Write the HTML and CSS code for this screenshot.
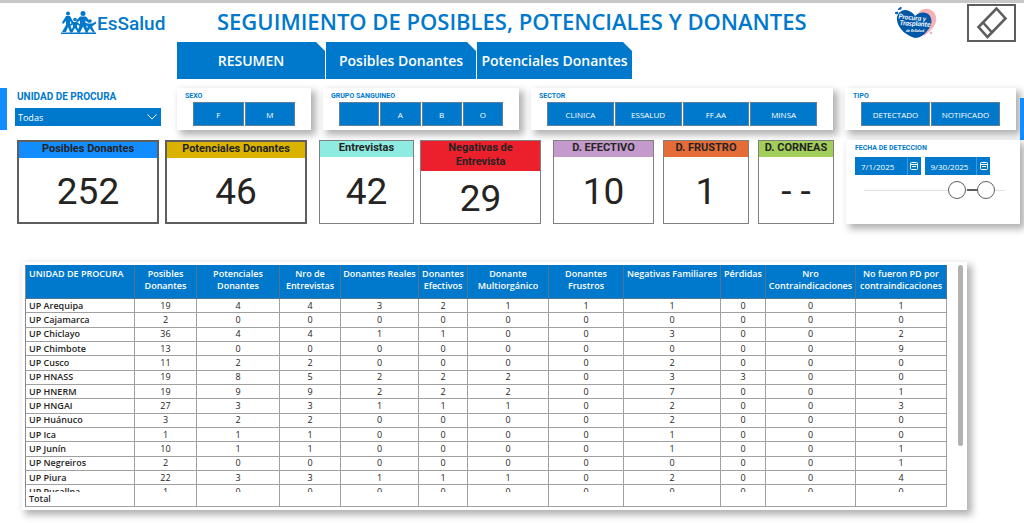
FILE: index.html
```html
<!DOCTYPE html>
<html lang="es">
<head>
    <meta charset="UTF-8">
    <meta name="viewport" content="width=device-width, initial-scale=1.0">
    <title>Seguimiento de Donantes</title>
    <link rel="stylesheet" href="styles.css">
</head>
<body>
    <header class="header">
        <div class="logo">
            <svg class="logo-family" viewBox="0 0 36 24" aria-hidden="true">
                <g fill="#0079cc">
                    <circle cx="7" cy="2.500" r="2"/>
                    <circle cx="22" cy="2.500" r="2.500"/>
                    <circle cx="14" cy="8.500" r="1.800"/>
                    <circle cx="21" cy="10" r="1.500"/>
                    <circle cx="29" cy="10" r="1.800"/>
                    <path d="M5 5h4l4 7-1 1.500-3-3.500V14l3 7H9l-2-5-2 5H1l4-7v-4l-3 3-1-1.500z"/>
                    <path d="M19 5.500h6l4 5-1 1.500-4-2.500 1 4 2 8h-2l-3-6-3 6h-3l3-8v-4l-3 2-1-1.500z"/>
                    <path d="M12 11h4l4 3-1 1-3-1.500V16l3 5.500h-2L14 17l-3 4.500H9l3-5.500v-2.500L9 15l-1-1z"/>
                    <path d="M27 12.500h4l4-2v2l-4 3 3 6h-2l-3-4-3 4h-2l3-6-4-2v-2z"/>
                    <path d="M0 21.500h35v1.500H0z"/>
                </g>
            </svg>
            <span class="logo-text">EsSalud</span>
        </div>
        <h1 class="title">SEGUIMIENTO DE POSIBLES, POTENCIALES Y DONANTES</h1>
        <svg class="heart" viewBox="0 0 44 34" role="img" aria-label="Procura y Trasplante">
            <path d="M23 11C24 3 32 1 37 4c7 4 7 13 0 20l-7 6z" fill="#f6b1b5"/>
            <path d="M21 32C13 30 4 23 3 14 2 7 9 2 15 5c3 1 5 3 6 5 4-4 11-5 15 0 3 5 1 11-3 15-3 4-7 7-12 7z" fill="#0057a8"/>
            <path d="M4 3.500l3-2.500v2zM1 7l3-1-1 2z" stroke="#0057a8" stroke-width="1" fill="#0057a8"/>
            <circle cx="37" cy="27" r="1.300" fill="#f6b1b5"/>
            <g fill="#fff" font-family="Lato, sans-serif" font-style="italic" font-weight="700" text-anchor="middle">
                <text x="18" y="14" font-size="7" transform="rotate(6 18 14)">Procura y</text>
                <text x="21" y="20" font-size="7" transform="rotate(3 21 20)">Trasplante</text>
                <text x="21" y="26" font-size="4">de EsSalud</text>
            </g>
        </svg>
        <button class="eraser" type="button" aria-label="Borrar filtros">
            <svg viewBox="0 0 32 32" fill="none" stroke="#605e5c" stroke-width="2.600">
                <path d="M20.500 1.500l9 10L11.500 30l-9-10z"/>
                <path d="M7 15.500l9 10"/>
            </svg>
        </button>
    </header>

    <nav class="tabs">
        <button class="tab" type="button">RESUMEN</button>
        <button class="tab" type="button">Posibles Donantes</button>
        <button class="tab" type="button">Potenciales Donantes</button>
    </nav>

    <main>
        <section class="filters">
            <div class="edge"></div>
            <div class="filter-grid">
                <div class="unit">
                    <label for="unidad">UNIDAD DE PROCURA</label>
                    <div class="select-box">
                        <select id="unidad">
                            <option>Todas</option>
                        </select>
                        <svg class="chevron" viewBox="0 0 10 6" fill="none" stroke="#fff"><path d="M0.500 0.500L5 5l4.500-4.500"/></svg>
                    </div>
                </div>
                <div class="panel slicer">
                    <h2>SEXO</h2>
                    <div class="options">
                        <button type="button">F</button>
                        <button type="button">M</button>
                    </div>
                </div>
                <div class="panel slicer">
                    <h2>GRUPO SANGUINEO</h2>
                    <div class="options">
                        <button type="button" aria-label="Sin grupo"></button>
                        <button type="button">A</button>
                        <button type="button">B</button>
                        <button type="button">O</button>
                    </div>
                </div>
                <div class="panel slicer">
                    <h2>SECTOR</h2>
                    <div class="options">
                        <button type="button">CLINICA</button>
                        <button type="button">ESSALUD</button>
                        <button type="button">FF.AA</button>
                        <button type="button">MINSA</button>
                    </div>
                </div>
                <div class="panel slicer">
                    <h2>TIPO</h2>
                    <div class="options">
                        <button type="button">DETECTADO</button>
                        <button type="button">NOTIFICADO</button>
                    </div>
                </div>
            </div>
            <div class="edge edge-right"></div>
        </section>

        <section class="summary">
            <div class="cards cards-main">
                <div class="card strong"><h3 class="blue">Posibles Donantes</h3><p>252</p></div>
                <div class="card strong"><h3 class="gold">Potenciales Donantes</h3><p>46</p></div>
            </div>
            <div class="cards cards-interview">
                <div class="card"><h3 class="aqua">Entrevistas</h3><p>42</p></div>
                <div class="card"><h3 class="red">Negativas de<br>Entrevista</h3><p>29</p></div>
            </div>
            <div class="cards cards-result">
                <div class="card"><h3 class="purple">D. EFECTIVO</h3><p>10</p></div>
                <div class="card"><h3 class="orange">D. FRUSTRO</h3><p>1</p></div>
                <div class="card"><h3 class="green">D. CORNEAS</h3><p>- -</p></div>
            </div>
            <div class="panel dates">
                <h2>FECHA DE DETECCION</h2>
                <div class="date-row">
                    <div class="date">
                        <input type="text" value="7/1/2025" aria-label="Desde">
                        <button type="button" aria-label="Abrir calendario inicial">
                            <svg viewBox="0 0 8 8" fill="none" stroke="#fff"><rect x="0.500" y="0.500" width="7" height="7" rx="1"/><path d="M1 2.500h6M2 4.500h4"/></svg>
                        </button>
                    </div>
                    <div class="date">
                        <input type="text" value="9/30/2025" aria-label="Hasta">
                        <button type="button" aria-label="Abrir calendario final">
                            <svg viewBox="0 0 8 8" fill="none" stroke="#fff"><rect x="0.500" y="0.500" width="7" height="7" rx="1"/><path d="M1 2.500h6M2 4.500h4"/></svg>
                        </button>
                    </div>
                </div>
                <div class="range">
                    <input type="range" min="0" max="100" value="68" aria-label="Fecha inicial">
                    <input type="range" min="0" max="100" value="92" aria-label="Fecha final">
                </div>
            </div>
        </section>

        <section class="panel report">
            <div class="table-scroll">
                <table>
                    <colgroup id="cols"></colgroup>
                    <thead>
                        <tr>
                            <th>UNIDAD DE PROCURA</th>
                            <th>Posibles Donantes</th>
                            <th>Potenciales Donantes</th>
                            <th>Nro de Entrevistas</th>
                            <th>Donantes Reales</th>
                            <th>Donantes Efectivos</th>
                            <th>Donante Multiorgánico</th>
                            <th>Donantes Frustros</th>
                            <th>Negativas Familiares</th>
                            <th>Pérdidas</th>
                            <th>Nro Contraindicaciones</th>
                            <th>No fueron PD por contraindicaciones</th>
                        </tr>
                    </thead>
                    <tbody id="rows"></tbody>
                    <tfoot>
                        <tr><th>Total</th><td></td><td></td><td></td><td></td><td></td><td></td><td></td><td></td><td></td><td></td><td></td></tr>
                    </tfoot>
                </table>
            </div>
            <div class="scrollbar"></div>
        </section>
    </main>

    <script src="script.js"></script>
</body>
</html>
```

FILE: styles.css
```css
* {
    box-sizing: border-box;
}

body {
    margin: 0;
    min-height: 100vh;
    border-top: 3px solid #c8c8c8;
    background-color: #fff;
    color: #252423;
    font-family: "Open Sans", "Noto Sans", sans-serif;
}

h1, h2, h3, p {
    margin: 0;
}

button, input, select {
    font-family: inherit;
    margin: 0;
    padding: 0;
}

/* Header */
.header {
    display: flex;
    align-items: center;
    height: 39px;
    padding: 0 8px 0 61px;
}

.logo {
    display: flex;
    align-items: center;
    width: 156px;
    color: #0079cc;
}

.logo-family {
    width: 36px;
    height: 24px;
}

.logo-text {
    font-family: Roboto, sans-serif;
    font-size: 19px;
    font-weight: 500;
    line-height: 24px;
    padding-top: 3px;
}

.title {
    flex: 1;
    color: #0079cc;
    font-size: 22px;
    font-weight: 600;
    line-height: 32px;
    padding-bottom: 4px;
    white-space: nowrap;
}

.heart {
    width: 44px;
    height: 34px;
    margin-right: 29px;
}

.eraser {
    width: 49px;
    height: 38px;
    border: 2px solid #605e5c;
    background-color: #fff;
}

.eraser svg {
    display: block;
    width: 32px;
    height: 32px;
    margin: auto;
}

/* Page tabs */
.tabs {
    display: grid;
    grid-template-columns: 148fr 150fr 155fr;
    gap: 1px;
    width: 455px;
    margin-left: 177px;
}

.tab {
    height: 37px;
    border: none;
    background-color: #0079cc;
    color: #fff;
    font-size: 14px;
    font-weight: 600;
    white-space: nowrap;
    clip-path: polygon(0 0, calc(100% - 9px) 0, 100% 9px, 100% 100%, 0 100%);
}

/* Filters */
.panel {
    background-color: #fff;
    box-shadow: 4px 4px 7px 1px rgba(0, 0, 0, 0.3);
}

.panel h2,
.unit label {
    color: #0079cc;
    font-family: Roboto, sans-serif;
    font-weight: 700;
}

.filters {
    display: flex;
    align-items: flex-start;
    padding-top: 9px;
}

.edge {
    width: 7px;
    height: 42px;
    background-color: #118dff;
}

.edge-right {
    width: 4px;
    margin-top: 10px;
}

.filter-grid {
    flex: 1;
    display: grid;
    grid-template-columns: 150fr 134fr 196fr 302fr 171fr;
    gap: 12px;
    height: 42px;
    margin: 0 4px 0 8px;
}

.unit {
    padding-right: 4px;
}

.unit label {
    display: block;
    padding: 3px 0 5px 2px;
    font-size: 10px;
    line-height: 12px;
}

.select-box {
    position: relative;
}

.select-box select {
    display: block;
    width: 100%;
    height: 18px;
    padding-left: 3px;
    border: none;
    border-radius: 0;
    appearance: none;
    background-color: #0079cc;
    color: #fff;
    font-size: 9px;
}

.chevron {
    position: absolute;
    top: 6px;
    right: 4px;
    width: 10px;
    height: 6px;
    pointer-events: none;
}

.slicer h2 {
    padding: 4px 0 2px 8px;
    font-size: 7px;
    line-height: 8px;
}

.options {
    display: flex;
    gap: 1px;
    padding: 0 16px;
}

.options button {
    flex: 1 1 0;
    min-width: 0;
    height: 24px;
    border: 1px solid #5f7f96;
    background-color: #0079cc;
    color: #fff;
    font-size: 8px;
}

/* Indicator cards */
.summary {
    display: grid;
    grid-template-columns: minmax(0, 290fr) minmax(0, 222fr) minmax(0, 281fr) minmax(0, 174fr);
    gap: 12px;
    padding: 0 4px 0 17px;
}

.cards {
    display: grid;
    gap: 6px;
}

.cards-main {
    grid-template-columns: 1fr 1fr;
}

.cards-interview {
    grid-template-columns: 95fr 121fr;
}

.cards-result {
    grid-template-columns: 101fr 86fr 76fr;
    gap: 9px;
}

.card {
    display: flex;
    flex-direction: column;
    height: 84px;
    border: 1px solid #808080;
    font-family: Roboto, sans-serif;
    text-align: center;
}

.card.strong {
    border: 2px solid #605e5c;
}

.card h3 {
    padding-bottom: 2px;
    font-size: 11px;
    line-height: 14px;
    white-space: nowrap;
}

.card p {
    flex: 1;
    display: flex;
    align-items: center;
    justify-content: center;
    padding-top: 4px;
    font-size: 37px;
    line-height: 44px;
}

.blue { background-color: #118dff; }
.gold { background-color: #d9b300; }
.aqua { background-color: #8eebe1; }
.red { background-color: #ec202c; }
.purple { background-color: #c39acb; }
.orange { background-color: #e66c37; }
.green { background-color: #a2cf5a; }

/* Date range */
.dates h2 {
    padding: 4px 0 4px 9px;
    font-size: 7px;
    line-height: 9px;
}

.date-row {
    display: flex;
    gap: 4px;
    padding: 0 30px 0 9px;
}

.date {
    flex: 1;
    display: flex;
    min-width: 0;
    height: 18px;
    background-color: #0079cc;
}

.date input {
    flex: 1;
    min-width: 0;
    padding-left: 6px;
    border: none;
    background: none;
    color: #fff;
    font-size: 8px;
}

.date button {
    width: 14px;
    border: none;
    border-left: 1px solid #3a9ade;
    background: none;
}

.date svg {
    display: block;
    width: 8px;
    height: 8px;
    margin: auto;
}

.range {
    display: grid;
    margin: 6px 15px 0 18px;
    background: linear-gradient(#605e5c, #605e5c) 82% 50% / 16px 2px no-repeat,
                linear-gradient(#e1e1e1, #e1e1e1) 0 50% / 100% 1px no-repeat;
}

.range input {
    grid-area: 1 / 1;
    width: 100%;
    height: 18px;
    appearance: none;
    background: none;
    pointer-events: none;
}

.range input::-webkit-slider-thumb {
    appearance: none;
    width: 18px;
    height: 18px;
    border: 1px solid #605e5c;
    border-radius: 50%;
    background-color: #fff;
    pointer-events: auto;
}

/* Report table */
.report {
    display: flex;
    align-items: flex-start;
    gap: 11px;
    margin: 38px 57px 0 22px;
    padding: 3px 4px 3px 3px;
}

.table-scroll {
    flex: 1;
    height: 242px;
    overflow: hidden;
}

table {
    width: 100%;
    height: 250px;
    table-layout: fixed;
    border-collapse: separate;
    border-spacing: 0;
    border-left: 1px solid #8a8a8a;
    font-size: 9px;
    line-height: 12px;
}

th, td {
    padding: 0;
    border-right: 1px solid #a0a0a0;
    border-bottom: 1px solid #a0a0a0;
    text-align: center;
}

th {
    font-weight: 600;
}

thead th {
    position: sticky;
    top: 0;
    height: 34px;
    padding-top: 3px;
    border-color: #4f7590;
    background-color: #0079cc;
    color: #fff;
    vertical-align: top;
}

tbody th,
tfoot th {
    padding-left: 3px;
    text-align: left;
}

thead th:first-child {
    padding-left: 3px;
    text-align: left;
}

tfoot th,
tfoot td {
    position: sticky;
    bottom: 0;
    height: 15px;
    background-color: #fff;
}

.scrollbar {
    width: 5px;
    height: 181px;
    border-radius: 3px;
    background-color: #b3b0ad;
}
```

FILE: script.js
```js
const widths = [109, 62, 83, 61, 78, 49, 81, 75, 97, 45, 90, 91];
const total = widths.reduce((a, b) => a + b, 0);

const data = [
    ['UP Arequipa', 19, 4, 4, 3, 2, 1, 1, 1, 0, 0, 1],
    ['UP Cajamarca', 2, 0, 0, 0, 0, 0, 0, 0, 0, 0, 0],
    ['UP Chiclayo', 36, 4, 4, 1, 1, 0, 0, 3, 0, 0, 2],
    ['UP Chimbote', 13, 0, 0, 0, 0, 0, 0, 0, 0, 0, 9],
    ['UP Cusco', 11, 2, 2, 0, 0, 0, 0, 2, 0, 0, 0],
    ['UP HNASS', 19, 8, 5, 2, 2, 2, 0, 3, 3, 0, 0],
    ['UP HNERM', 19, 9, 9, 2, 2, 2, 0, 7, 0, 0, 1],
    ['UP HNGAI', 27, 3, 3, 1, 1, 1, 0, 2, 0, 0, 3],
    ['UP Huánuco', 3, 2, 2, 0, 0, 0, 0, 2, 0, 0, 0],
    ['UP Ica', 1, 1, 1, 0, 0, 0, 0, 1, 0, 0, 0],
    ['UP Junín', 10, 1, 1, 0, 0, 0, 0, 1, 0, 0, 1],
    ['UP Negreiros', 2, 0, 0, 0, 0, 0, 0, 0, 0, 0, 1],
    ['UP Piura', 22, 3, 3, 1, 1, 1, 0, 2, 0, 0, 4],
    ['UP Pucallpa', 1, 0, 0, 0, 0, 0, 0, 0, 0, 0, 0]
];

// Column widths as a share of the table
document.getElementById('cols').innerHTML = widths
    .map(w => `<col style="width: ${w / total * 100}%">`)
    .join('');

document.getElementById('rows').innerHTML = data
    .map(row => `<tr><th>${row[0]}</th>${row.slice(1).map(v => `<td>${v}</td>`).join('')}</tr>`)
    .join('');
```
